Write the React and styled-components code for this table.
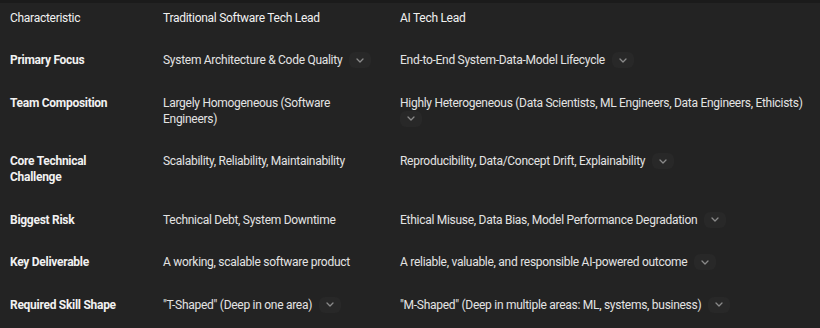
import React from 'react'
import styled, { createGlobalStyle } from 'styled-components'

const Global = createGlobalStyle`
    html, body {
        margin: 0;
        padding: 0;
        background: #232323;
    }
    body {
        font-family: Roboto, "Liberation Sans", Arial, sans-serif;
        color: #e3e3e3;
        font-size: 12px;
        letter-spacing: -0.28px;
    }
`

const Page = styled.div`
    width: 820px;
    height: 328px;
    overflow: hidden;
    background: #232323;
    border-top: 3px solid #1b1b1b;
    box-sizing: border-box;
`

const Table = styled.div`
    display: grid;
    grid-template-columns: 153px 237px 1fr;
    padding: 0 4px 0 10px;
    margin-top: -3px;
`

const Cell = styled.div`
    padding: ${p => (p.$head ? '9.5px' : '13px')} ${p => (p.$last ? '0' : '20px')} 13.5px 0;
    line-height: 16px;
    font-weight: ${p => (p.$label ? 700 : 400)};
    color: ${p => (p.$label || p.$head ? '#f1f1f1' : '#e3e3e3')};
`

const Pill = styled.span`
    display: inline-flex;
    align-items: center;
    justify-content: center;
    width: 22px;
    height: 16px;
    margin-left: ${p => (p.$first ? '0' : '7px')};
    border-radius: 6px;
    background: #282828;
    vertical-align: top;
`

const Chevron = () => (
    <svg width="8" height="5" viewBox="0 0 8 5">
        <path d="M1 1l3 3 3-3" fill="none" stroke="#8a8a8a" strokeWidth="1.3" strokeLinecap="round" strokeLinejoin="round" />
    </svg>
)

const More = ({ first }) => (
    <Pill $first={first}>
        <Chevron />
    </Pill>
)

const rows = [
    ['Primary Focus', 'System Architecture & Code Quality', true, 'End-to-End System-Data-Model Lifecycle', true],
    ['Team Composition', 'Largely Homogeneous (Software Engineers)', false, 'Highly Heterogeneous (Data Scientists, ML Engineers, Data Engineers, Ethicists)', 'wrap'],
    ['Core Technical Challenge', 'Scalability, Reliability, Maintainability', false, 'Reproducibility, Data/Concept Drift, Explainability', true],
    ['Biggest Risk', 'Technical Debt, System Downtime', false, 'Ethical Misuse, Data Bias, Model Performance Degradation', true],
    ['Key Deliverable', 'A working, scalable software product', false, 'A reliable, valuable, and responsible AI-powered outcome', true],
    ['Required Skill Shape', '"T-Shaped" (Deep in one area)', true, '"M-Shaped" (Deep in multiple areas: ML, systems, business)', true],
]

const App = () => {
    return (
        <Page>
            <Global />
            <Table>
                <Cell $head>Characteristic</Cell>
                <Cell $head>Traditional Software Tech Lead</Cell>
                <Cell $head $last>AI Tech Lead</Cell>

                {rows.map(([label, trad, tradMore, ai, aiMore]) => (
                    <React.Fragment key={label}>
                        <Cell $label style={label === 'Core Technical Challenge' ? { paddingRight: 40 } : undefined}>{label}</Cell>
                        <Cell>
                            {trad}
                            {tradMore && <More />}
                        </Cell>
                        <Cell $last>
                            {ai}
                            {aiMore === 'wrap' ? <><br /><More first /></> : aiMore && <More />}
                        </Cell>
                    </React.Fragment>
                ))}
            </Table>
        </Page>
    )
}

export default App
